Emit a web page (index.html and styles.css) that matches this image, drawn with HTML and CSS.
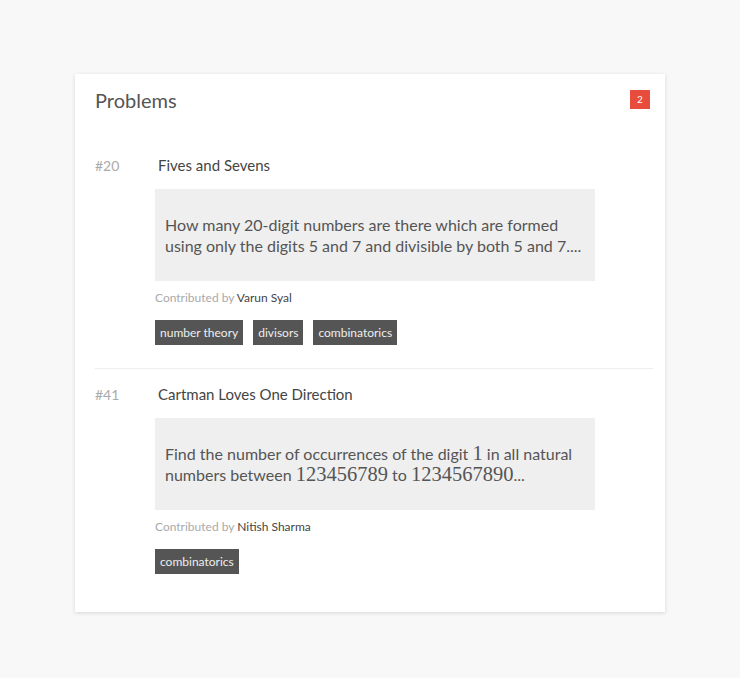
FILE: index.html
```html
<!DOCTYPE html>
<html>
<head>
<meta charset="utf-8">
<link rel="stylesheet" href="styles.css">
</head>
<body>
<div class="card">
  <div class="card-head">
    <h2 class="card-title">Problems</h2>
    <span class="badge">2</span>
  </div>
  <div class="problem">
    <div class="problem-row">
      <span class="problem-num">#20</span>
      <span class="problem-title">Fives and Sevens</span>
    </div>
    <div class="problem-body">
      <div class="excerpt">How many 20-digit numbers are there which are formed using only the digits 5 and 7 and divisible by both 5 and 7....</div>
      <div class="contrib">Contributed by <span class="author">Varun Syal</span></div>
      <div class="tags">
        <span class="tag">number theory</span>
        <span class="tag">divisors</span>
        <span class="tag">combinatorics</span>
      </div>
    </div>
  </div>
  <div class="problem">
    <div class="problem-row">
      <span class="problem-num">#41</span>
      <span class="problem-title">Cartman Loves One Direction</span>
    </div>
    <div class="problem-body">
      <div class="excerpt">Find the number of occurrences of the digit <span class="math">1</span> in all natural numbers between <span class="math">123456789</span> to <span class="math">1234567890</span>...</div>
      <div class="contrib">Contributed by <span class="author">Nitish Sharma</span></div>
      <div class="tags">
        <span class="tag">combinatorics</span>
      </div>
    </div>
  </div>
</div>
</body>
</html>
```
FILE: styles.css
```css
html, body {
  margin: 0;
  padding: 0;
  background: #f8f8f8;
}
body {
  font-family: Lato, "Open Sans", sans-serif;
  color: #555;
  padding: 74px 75px 66px 75px;
}
.card {
  background: #fff;
  box-shadow: 0 1px 4px rgba(0,0,0,0.14);
  padding: 16px 12px 38px 20px;
}
.card-head {
  display: flex;
  justify-content: space-between;
  align-items: flex-start;
  padding-right: 3px;
}
.card-title {
  margin: 0;
  font-size: 20px;
  font-weight: 400;
  color: #555;
  line-height: 20px;
}
.badge {
  background: #e74c3c;
  color: #fff;
  font-size: 10px;
  width: 20px;
  height: 19px;
  line-height: 19px;
  text-align: center;
}
.problem {
  padding-top: 44px;
}
.problem + .problem {
  border-top: 1px solid #eee;
  margin-top: 23px;
  padding-top: 14px;
}
.problem-row {
  display: flex;
  align-items: center;
  height: 22px;
}
.problem-num {
  width: 63px;
  font-size: 14px;
  color: #aaa;
}
.problem-title {
  font-size: 15px;
  color: #444;
}
.problem-body {
  margin-left: 60px;
  margin-top: 13px;
  width: 440px;
}
.excerpt {
  background: #efefef;
  padding: 25px 6px 25px 10px;
  font-size: 16px;
  line-height: 21px;
  color: #555;
}
.math {
  font-family: "Liberation Serif", serif;
  font-size: 20.5px;
  line-height: 1;
}
.contrib {
  margin-top: 9px;
  font-size: 12px;
  color: #aaa;
  line-height: 16px;
}
.author {
  color: #444;
}
.tags {
  display: flex;
  gap: 10px;
  margin-top: 14px;
}
.tag {
  background: #555;
  color: #eee;
  font-size: 12px;
  height: 25px;
  line-height: 25px;
  padding: 0 5px;
}
```
